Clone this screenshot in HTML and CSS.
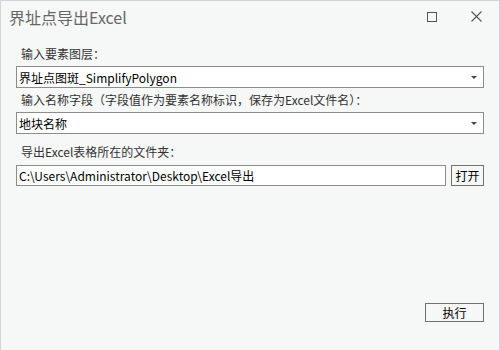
FILE: index.html
```html
<!DOCTYPE html>
<html lang="zh-CN">
<head>
  <meta charset="UTF-8" />
  <title>界址点导出Excel</title>
  <link rel="stylesheet" href="styles.css">
</head>
<body>
  <div class="window">
    <div class="titlebar">
      <div class="title">界址点导出Excel</div>
      <div class="title-buttons">
        <div class="title-btn"><span class="icon-max"></span></div>
        <div class="title-btn">
          <svg width="11" height="11" viewBox="0 0 11 11">
            <path d="M0.5 0.5 L10.5 10.5 M10.5 0.5 L0.5 10.5" stroke="#555" stroke-width="1.1" fill="none" />
          </svg>
        </div>
      </div>
    </div>

    <div class="content">
      <div class="label">输入要素图层：</div>
      <div class="combo">
        <span>界址点图斑_SimplifyPolygon</span>
        <span class="arrow"></span>
      </div>

      <div class="label">输入名称字段（字段值作为要素名称标识，保存为Excel文件名）：</div>
      <div class="combo">
        <span>地块名称</span>
        <span class="arrow"></span>
      </div>

      <div class="label folder-label">导出Excel表格所在的文件夹：</div>
      <div class="folder-row">
        <div class="textbox">C:\Users\Administrator\Desktop\Excel导出</div>
        <button class="btn btn-open">打开</button>
      </div>
    </div>

    <div class="footer">
      <button class="btn btn-run">执行</button>
    </div>
  </div>
</body>
</html>
```

FILE: styles.css
```css
* {
  box-sizing: border-box;
  margin: 0;
  padding: 0;
}

body {
  font-family: "Noto Sans CJK SC", "Noto Sans", sans-serif;
  font-size: 12px;
  background: #f6f7f7;
}

.window {
  width: 500px;
  height: 350px;
  border: 1px solid #d2d5d8;
  border-bottom: none;
  background: #f6f7f7;
  display: flex;
  flex-direction: column;
}

/* Title bar */
.titlebar {
  display: flex;
  height: 37px;
}

.title {
  padding-left: 8px;
  line-height: 32px;
  font-size: 16px;
  color: #666;
}

.title-buttons {
  margin-left: auto;
  display: flex;
}

.title-btn {
  width: 45px;
  height: 31px;
  display: flex;
  align-items: center;
  justify-content: center;
}

.icon-max {
  width: 10px;
  height: 10px;
  border: 1px solid #555;
}

/* Form */
.content {
  padding: 8px 15px 0;
}

.label {
  line-height: 16px;
  padding-left: 5px;
  margin-bottom: 4px;
  color: #333;
}

.combo {
  height: 22px;
  border: 1px solid #8c8c8c;
  background: #fff;
  display: flex;
  align-items: center;
  padding: 0 6px 0 2px;
  margin-bottom: 4px;
  color: #000;
}

.arrow {
  margin-left: auto;
  width: 0;
  height: 0;
  border-left: 3px solid transparent;
  border-right: 3px solid transparent;
  border-top: 3px solid #444;
}

.folder-label {
  margin-top: 10px;
  margin-bottom: 5px;
}

.folder-row {
  display: flex;
  gap: 5px;
}

.textbox {
  flex: 1;
  height: 21px;
  border: 1px solid #8c8c8c;
  background: #fff;
  padding-left: 2px;
  line-height: 19px;
  color: #000;
}

.btn {
  font-family: inherit;
  font-size: 12px;
  color: #000;
  background: #f6f7f7;
  border: 1px solid #707070;
}

.btn-open {
  width: 33px;
  height: 21px;
}

/* Footer */
.footer {
  margin-top: auto;
  display: flex;
  justify-content: flex-end;
  padding: 0 15px 28px;
}

.btn-run {
  width: 59px;
  height: 19px;
  line-height: 17px;
}
```
